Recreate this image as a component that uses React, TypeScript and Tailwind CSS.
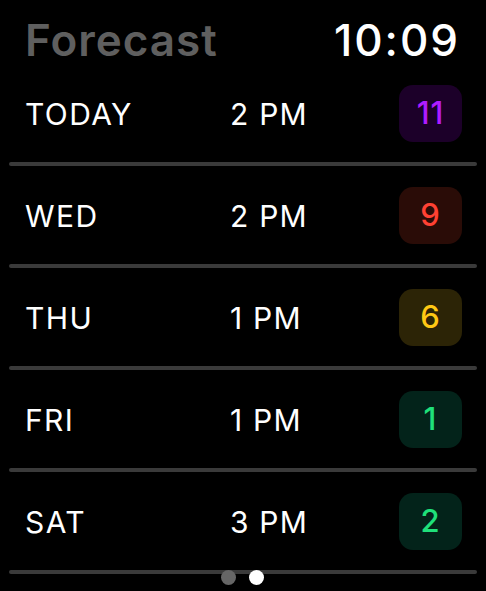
const rows = [
  { day: "TODAY", time: "2 PM", uv: "11", bg: "bg-[#1c0029]", fg: "text-[#b01cff]" },
  { day: "WED", time: "2 PM", uv: "9", bg: "bg-[#2a0c07]", fg: "text-[#ff4133]" },
  { day: "THU", time: "1 PM", uv: "6", bg: "bg-[#2c2406]", fg: "text-[#ffc814]" },
  { day: "FRI", time: "1 PM", uv: "1", bg: "bg-[#03231a]", fg: "text-[#1fe07a]" },
  { day: "SAT", time: "3 PM", uv: "2", bg: "bg-[#03231a]", fg: "text-[#1fe07a]" },
];

function App() {
  return (
    <div className="relative w-[486px] h-[591px] overflow-hidden bg-black font-['Inter',sans-serif] text-white">
      <div className="flex h-[64px] items-start justify-between pl-[25px] pr-[26px] pt-[14px]">
        <span className="text-[44px] leading-[52px] font-semibold tracking-[1px] text-[#5f5f5f]">Forecast</span>
        <span className="text-[44px] leading-[52px] font-medium tracking-[2px]">10:09</span>
      </div>

      {rows.map((r) => (
        <div key={r.day}>
          <div className="flex h-[98px] items-center pl-[25px] pr-[24px]">
            <span className="w-[205px] pt-[3px] text-[30px] tracking-[1.4px]">{r.day}</span>
            <span className="flex-1 pt-[3px] text-[30px] tracking-[1.2px]">{r.time}</span>
            <div className={`flex h-[57px] w-[63px] items-center justify-center rounded-[14px] ${r.bg}`}>
              <span className={`text-[31px] font-medium tracking-[1px] ${r.fg}`}>{r.uv}</span>
            </div>
          </div>
          <div className="mx-[9px] h-[4px] rounded-full bg-[#3a3a3a]" />
        </div>
      ))}

      <div className="absolute left-[221px] top-[570px] flex gap-[13px]">
        <div className="h-[15px] w-[15px] rounded-full bg-[#666666]" />
        <div className="h-[15px] w-[15px] rounded-full bg-white" />
      </div>
    </div>
  );
}

export default App;
